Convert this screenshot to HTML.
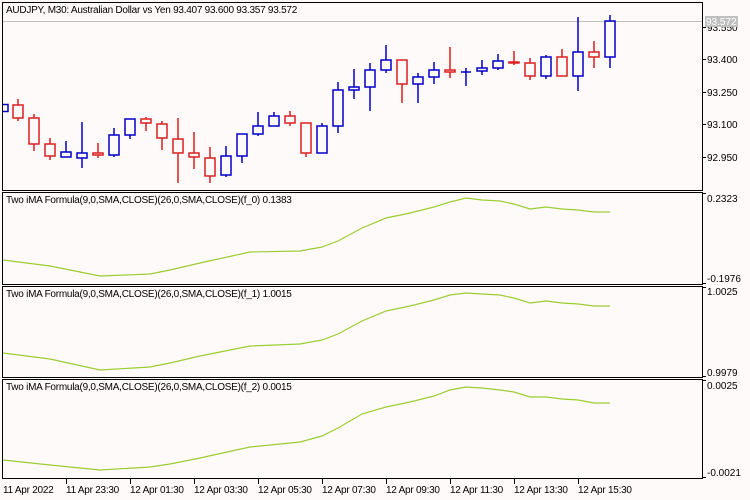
<!DOCTYPE html>
<html><head><style>
html,body{margin:0;padding:0;background:#fffafa;}
svg{display:block;font-family:"Liberation Sans",sans-serif;font-size:10px;}
.t{letter-spacing:-0.25px;}
</style></head><body>
<svg width="750" height="500" viewBox="0 0 750 500">
<rect width="750" height="500" fill="#fffafa"/>
<g fill="none" stroke="#000" stroke-width="1">
<rect x="2.5" y="2.5" width="700" height="188"/>
<rect x="2.5" y="192.5" width="700" height="92"/>
<rect x="2.5" y="286.5" width="700" height="91"/>
<rect x="2.5" y="379.5" width="700" height="99"/>
</g>
<line x1="3" y1="21.5" x2="702" y2="21.5" stroke="#c0c0c0"/>
<g stroke="#000"><path d="M702 59.5h4M702 92.5h4M702 124.5h4M702 157.5h4M702 27.5h4"/>
<path d="M702 193.5h4M702 283.5h4M702 287.5h4M702 376.5h4M702 380.5h4M702 477.5h4"/>
<path d="M66.5 479v5M130.5 479v5M194.5 479v5M258.5 479v5M322.5 479v5M386.5 479v5M450.5 479v5M514.5 479v5M578.5 479v5"/></g>
<g fill="#000">
<text x="707" y="31">93.550</text>
<rect x="705" y="16" width="33" height="11" fill="#c0c0c0"/>
<text x="706" y="25" fill="#fff">93.572</text>
<text x="707" y="63">93.400</text>
<text x="707" y="96">93.250</text>
<text x="707" y="128">93.100</text>
<text x="707" y="161">92.950</text>
<text x="707" y="202">0.2323</text>
<text x="707" y="282">-0.1976</text>
<text x="707" y="295">1.0025</text>
<text x="707" y="376">0.9979</text>
<text x="707" y="389">0.0025</text>
<text x="707" y="476">-0.0021</text>
<text class="t" x="6" y="13">AUDJPY, M30:  Australian Dollar vs Yen  93.407 93.600 93.357 93.572</text>
<text class="t" x="6" y="203">Two iMA Formula(9,0,SMA,CLOSE)(26,0,SMA,CLOSE)(f_0) 0.1383</text>
<text class="t" x="6" y="297">Two iMA Formula(9,0,SMA,CLOSE)(26,0,SMA,CLOSE)(f_1) 1.0015</text>
<text class="t" x="6" y="390">Two iMA Formula(9,0,SMA,CLOSE)(26,0,SMA,CLOSE)(f_2) 0.0015</text>
<text class="t" x="3" y="493">11 Apr 2022</text>
<text class="t" x="66" y="493">11 Apr 23:30</text>
<text class="t" x="130" y="493">12 Apr 01:30</text>
<text class="t" x="194" y="493">12 Apr 03:30</text>
<text class="t" x="258" y="493">12 Apr 05:30</text>
<text class="t" x="322" y="493">12 Apr 07:30</text>
<text class="t" x="386" y="493">12 Apr 09:30</text>
<text class="t" x="450" y="493">12 Apr 11:30</text>
<text class="t" x="514" y="493">12 Apr 13:30</text>
<text class="t" x="578" y="493">12 Apr 15:30</text>
</g>
<g fill="none" stroke="#9acd32" stroke-width="1.2">
<polyline points="3,260 50,266 100,276 150,274 170,270 200,263 250,252 300,251 322,247 338,241 362,228 386,218 410,213 434,207 450,202 466,198 482,200 500,201 514,204 530,209 546,207 562,209 578,210 594,212 610,212"/>
<polyline points="3,353 50,359 100,370 150,367 170,363 200,356 250,346 300,344 322,340 338,334 362,321 386,311 410,306 434,300 450,295 466,293 482,294 500,295 514,298 530,303 546,301 562,303 578,304 594,306 610,306"/>
<polyline points="3,460 50,465 100,470 150,467 170,464 200,458 250,447 300,442 322,436 338,428 362,414 386,407 410,402 434,396 450,390 466,387 482,388 500,390 514,392 530,397 546,397 562,399 578,400 594,403 610,403"/>
</g>
<g stroke-width="1.5" fill="none">
<path stroke="#0000c8" d="M3 104.5h5v7h-5"/>
<path stroke="#dc1e1e" d="M18 99v6M18 118v3M13 105h10v13h-10zM34 114v4M34 144v7M29 118h10v26h-10zM50 138v6M50 156v4M45 144h10v12h-10zM98 143v10M98 155v3M93 153h10v2h-10zM146 117v2M146 123v8M141 119h10v4h-10zM162 121v3M162 138v12M157 124h10v14h-10zM178 118v21M178 153v30M173 139h10v14h-10zM194 132v21M194 157v12M189 153h10v4h-10zM210 147v11M210 176v7M205 158h10v18h-10zM290 111v5M290 123v3M285 116h10v7h-10zM306 153v4M301 123h10v30h-10zM402 103v-19M397 60h10v24h-10zM450 47v23M450 72v6M445 70h10v2h-10zM514 51v11M514 63v2M509 62h10v1h-10zM530 58v5M530 76v4M525 63h10v13h-10zM562 49v8M557 57h10v19h-10zM594 41v11M594 57v11M589 52h10v5h-10z"/>
<path stroke="#0000c8" d="M66 141v11M61 152h10v5h-10zM82 122v31M82 158v10M77 153h10v5h-10zM114 128v7M114 155v2M109 135h10v20h-10zM130 135v4M125 119h10v16h-10zM226 146v10M226 175v2M221 156h10v19h-10zM242 156v7M237 134h10v22h-10zM258 112v14M258 134v2M253 126h10v8h-10zM274 112v4M269 116h10v10h-10zM322 123v3M317 126h10v27h-10zM338 82v8M338 126v7M333 90h10v36h-10zM354 69v18M354 90v9M349 87h10v3h-10zM370 63v7M370 87v24M365 70h10v17h-10zM386 45v15M386 70v3M381 60h10v10h-10zM418 73v4M418 84v19M413 77h10v7h-10zM434 62v8M434 77v7M429 70h10v7h-10zM466 68v18M461 72h10M482 60v8M482 71v4M477 68h10v3h-10zM498 54v7M498 68v2M493 61h10v7h-10zM546 55v2M546 76v3M541 57h10v19h-10zM578 17v35M578 76v15M573 52h10v24h-10zM610 15v6M610 57v11M605 21h10v36h-10z"/>
</g>
</svg>
</body></html>
